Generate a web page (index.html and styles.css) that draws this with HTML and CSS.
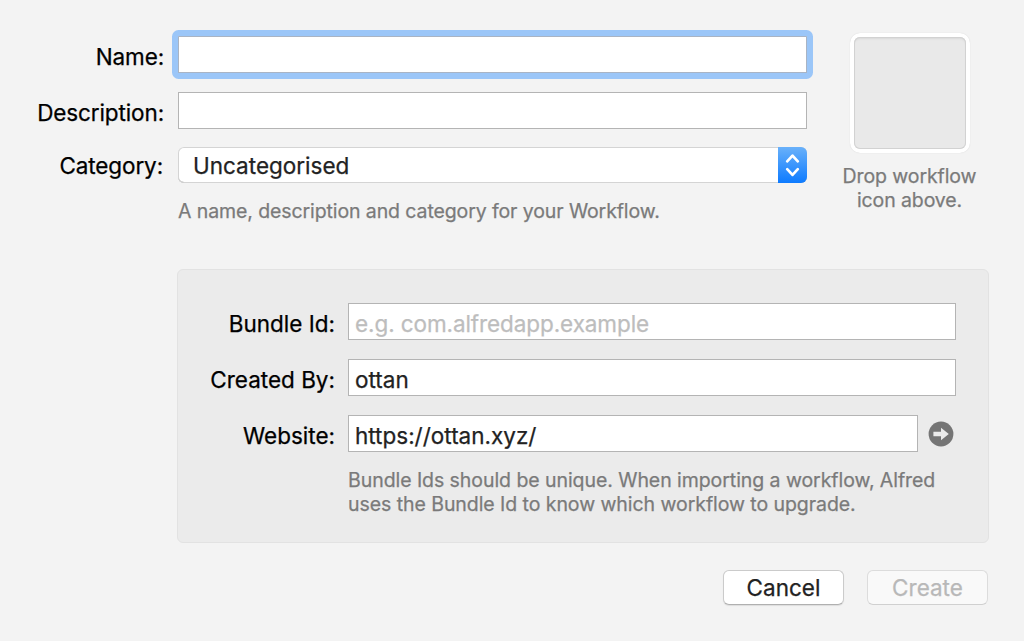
FILE: index.html
```html
<!DOCTYPE html>
<html lang="en">
<head>
<meta charset="utf-8">
<title>Workflow</title>
<link rel="stylesheet" href="styles.css">
</head>
<body>
<form class="dialog">
  <div class="top">
    <div class="details">
      <label class="label tight" for="name">Name:</label>
      <input class="field focused" id="name" type="text">
      <label class="label tight" for="description">Description:</label>
      <input class="field" id="description" type="text">
      <label class="label label-category tight">Category:</label>
      <div class="select">
        <span class="select-value">Uncategorised</span>
        <span class="stepper">
          <svg width="29" height="36" viewBox="0 0 29 36" fill="none" stroke="#fff" stroke-width="2.7" stroke-linecap="round" stroke-linejoin="round"><path d="M9.200 14.300 14.500 8.600l5.300 5.700M9.200 22.200l5.300 5.700 5.300-5.700"/></svg>
        </span>
      </div>
      <p class="hint hint-top">A name, description and category for your Workflow.</p>
    </div>
    <div class="drop">
      <div class="well"><div class="well-inner"></div></div>
      <p class="hint drop-text">Drop workflow<br>icon above.</p>
    </div>
  </div>

  <div class="panel">
    <label class="label" for="bundle">Bundle Id:</label>
    <input class="field field-bundle" id="bundle" type="text" placeholder="e.g. com.alfredapp.example">
    <label class="label" for="author">Created By:</label>
    <input class="field" id="author" type="text" value="ottan">
    <label class="label" for="website">Website:</label>
    <div class="website-row">
      <input class="field field-website" id="website" type="text" value="https://ottan.xyz/">
      <svg width="26" height="26" viewBox="0 0 26 26"><circle cx="13" cy="13" r="12.400" fill="#757575"/><path d="M5.400 10.800h7.600V6.700l7.800 6.300-7.800 6.300v-4.100H5.400z" fill="#ebebeb"/></svg>
    </div>
    <p class="hint panel-hint">Bundle Ids should be unique. When importing a workflow, Alfred<br>uses the Bundle Id to know which workflow to upgrade.</p>
  </div>

  <div class="actions">
    <button class="button" type="button">Cancel</button>
    <button class="button" type="button" disabled>Create</button>
  </div>
</form>
</body>
</html>
```
FILE: styles.css
```css
* { box-sizing: border-box; }

body {
  margin: 0;
  background: #f3f3f3;
  color: #000;
  font: 22.5px/28px Inter, Roboto, "Liberation Sans", sans-serif;
  white-space: nowrap;
  -webkit-text-stroke: 0.25px currentColor;
}

p { margin: 0; }

.dialog {
  width: 1024px;
  height: 641px;
  padding: 33px 35px 0 0;
  overflow: hidden;
}

.top {
  display: flex;
  height: 236px;
}

.details {
  flex: none;
  width: 807px;
  padding-top: 3px;
  display: grid;
  grid-template-columns: 164px 629px;
  grid-template-rows: 37px 37px 36px 30px;
  column-gap: 14px;
  row-gap: 19px;
  align-content: start;
}

.label {
  padding-top: 7px;
  text-align: right;
}

.tight { letter-spacing: -0.12px; }

.label-category { padding-top: 4px; padding-right: 1px; }

.field {
  width: 100%;
  height: 37px;
  margin: 0;
  padding: 4px 6px 0;
  border: 1px solid #b4b4b4;
  border-radius: 0;
  outline: none;
  background: #fff;
  color: #222;
  font: inherit;
}

.field::placeholder { color: #bdbdbd; opacity: 1; }

.field-bundle { letter-spacing: -0.09px; }

.focused {
  border-color: #a9b4c4;
  outline: 6px solid #9bc6f8;
  border-radius: 0.5px;
}

.select {
  display: flex;
  height: 36px;
  margin-top: -1px;
  border-radius: 6px;
  background: #fff;
  box-shadow: inset 0 0 0 1px #d4d4d4, inset 0 -1px 0 #aaa;
  overflow: hidden;
}

.select-value {
  flex: 1;
  padding: 5px 0 0 15px;
  color: #222;
}

.stepper {
  width: 29px;
  height: 36px;
  background: linear-gradient(#69b1fa, #0d7bff);
}

.hint {
  color: #7a7a7a;
  font-size: 19.5px;
  line-height: 24.5px;
  letter-spacing: -0.1px;
}

.hint-top { grid-column: 2; margin-top: -4px; }

.drop {
  flex: none;
  width: 205px;
  display: flex;
  flex-direction: column;
  align-items: center;
}

.well {
  width: 120px;
  height: 120px;
  padding: 4px;
  border-radius: 10px;
  background: #fff;
  box-shadow: 0 0 1px #ccc;
}

.well-inner {
  height: 112px;
  border-radius: 6px;
  background: #e9e9e9;
  box-shadow: inset 0 0 0 1px #d2d2d2, inset 0 2px 2px #dadada;
}

.drop-text {
  margin-top: 11px;
  line-height: 24px;
  text-align: center;
}

.panel {
  width: 812px;
  height: 274px;
  margin-left: 177px;
  padding: 33px 32px 0 0;
  display: grid;
  grid-template-columns: 157px 608px;
  grid-template-rows: 37px 37px 37px 49px;
  column-gap: 13px;
  row-gap: 19px;
  align-content: start;
  border: 1px solid #e2e2e2;
  border-radius: 6px;
  background: #ebebeb;
}

.website-row {
  display: flex;
  align-items: center;
  gap: 10px;
}

.field-website { width: 570px; }

.panel-hint {
  grid-column: 2;
  margin-top: -3px;
  line-height: 24px;
  letter-spacing: -0.06px;
}

.actions {
  display: flex;
  justify-content: flex-end;
  gap: 23px;
  padding: 27px 1px 0 0;
}

.button {
  width: 121px;
  height: 35px;
  padding: 0;
  border: 1px solid #cbcbcb;
  border-bottom-color: #b0b0b0;
  border-radius: 6px;
  background: #fff;
  box-shadow: 0 1px 1px #ddd;
  color: #222;
  font: inherit;
}

.button:disabled {
  border-color: #dcdcdc;
  border-bottom-color: #d0d0d0;
  background: #f9f9f9;
  box-shadow: none;
  color: #b8b8b8;
}
```
